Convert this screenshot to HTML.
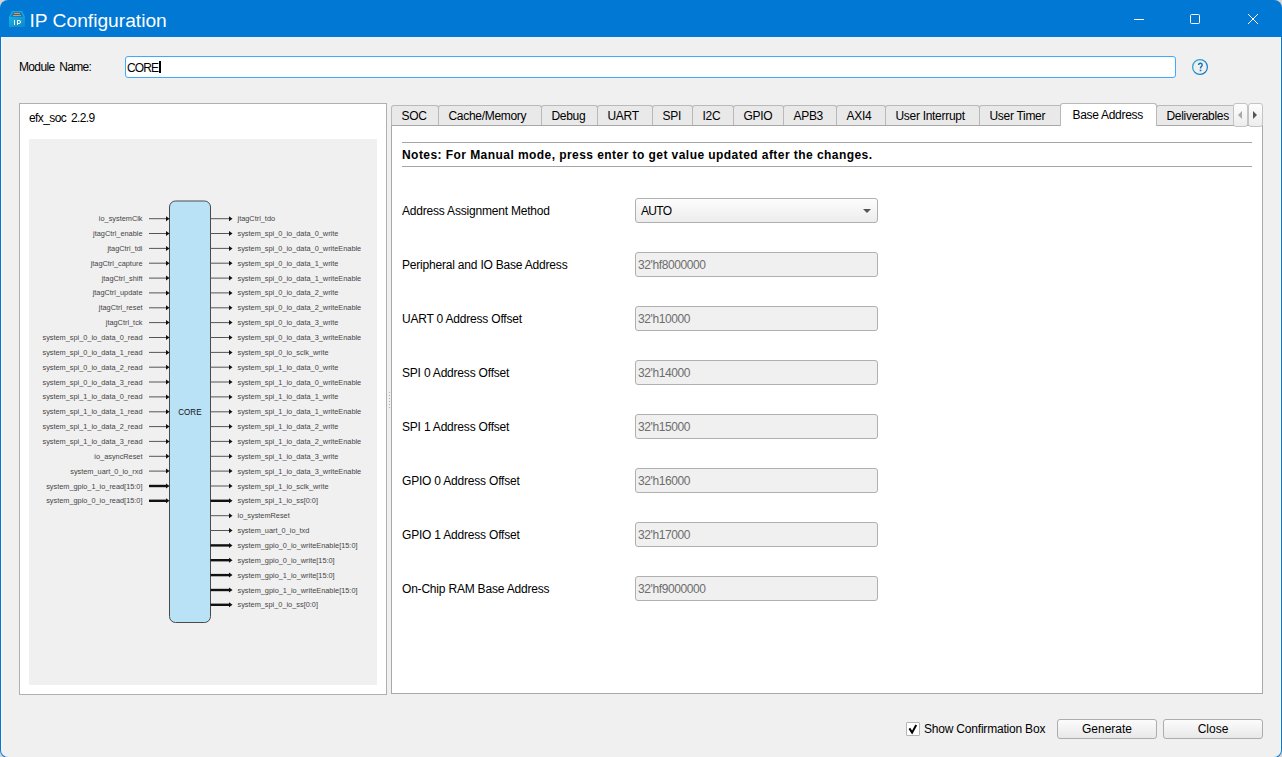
<!DOCTYPE html>
<html><head><meta charset="utf-8">
<style>
*{box-sizing:border-box;margin:0;padding:0}
html,body{width:1282px;height:757px;overflow:hidden;background:#d4d4d4}
body{position:relative;font-family:"Liberation Sans",sans-serif;font-size:12px;color:#000}
.abs{position:absolute}
#win{position:absolute;left:0;top:0;width:1282px;height:758px;background:#0078d4;border-radius:8px;overflow:hidden}
#client{position:absolute;left:1px;top:37px;width:1280px;height:720px;background:#f0f0f0;border-left:1px solid #fbf6ef;border-right:1px solid #fbf6ef;border-radius:0 0 7px 7px}
#title{position:absolute;left:29.5px;top:9px;color:#fff;font-size:19.2px;line-height:24px;white-space:pre}
.tb{position:absolute;background:#fff}
.lab{position:absolute;white-space:pre;line-height:14px}
#modin{position:absolute;left:125px;top:56px;width:1051px;height:22px;background:#fff;border:1px solid #3fa9ff;border-radius:3px}
#modin span{position:absolute;left:1px;top:4px;line-height:14px;font-size:12px;letter-spacing:-0.9px}
#lpanel{position:absolute;left:19px;top:103px;width:368px;height:592px;background:#fff;border:1px solid #b0b0b0}
#diag{position:absolute;left:29px;top:139px;width:348px;height:546px;background:#f0f0f0;overflow:hidden}
#diag text{font-family:"Liberation Sans",sans-serif;font-size:7.35px;fill:#454545}
#diag text.core{font-size:9.6px;fill:#111}
.tab{position:absolute;top:105px;height:20px;background:#e9e9e9;border:1px solid #b9b9b9;border-bottom:none;border-radius:3px 3px 0 0;font-size:12px;white-space:pre;overflow:hidden}
.tab span{position:absolute;left:9.5px;top:3px;line-height:14px;letter-spacing:-0.3px}
.tab.sel{top:103px;height:23px;background:#fff;z-index:3}
.tab.sel span{left:11.5px;top:4px}
#pane{position:absolute;left:391px;top:125px;width:872px;height:569px;background:#fff;border:1px solid #a8a8a8}
.hl{position:absolute;left:402px;width:850px;height:2px;background:#a6a6a6}
#notes{position:absolute;left:402px;top:148px;font-weight:bold;font-size:12px;line-height:14px;white-space:pre;letter-spacing:0.44px}
.lbl{position:absolute;left:402px;line-height:14px;white-space:pre;font-size:12px;letter-spacing:-0.2px}
.combo{position:absolute;left:635px;width:243px;height:25px;border:1px solid #b0b0b0;border-radius:3px;background:linear-gradient(#fdfdfd,#ececec)}
.combo span{position:absolute;left:5px;top:5px;line-height:14px;letter-spacing:-0.7px}
.arr{position:absolute;left:226.5px;top:9.5px;width:0;height:0;border-left:4px solid transparent;border-right:4px solid transparent;border-top:4px solid #555}
.field{position:absolute;left:635px;width:243px;height:25px;border:1px solid #b0b0b0;border-radius:3px;background:#f0f0f0}
.field span{position:absolute;left:2px;top:5px;line-height:14px;color:#6d6d6d;letter-spacing:-0.4px}
.btn{position:absolute;top:719px;width:100px;height:20px;border:1px solid #adadad;border-radius:3px;background:linear-gradient(#fcfcfc,#e8e8e8);text-align:center;line-height:19px;font-size:12px}
.sbtn{position:absolute;top:103px;width:15px;height:24px;border:1px solid #c4c4c4;border-radius:3px;background:linear-gradient(#fdfdfd,#ededed);z-index:4}
</style></head><body>
<div id="win">
  <div id="client"></div>
</div>
<!-- title icon -->
<svg class="abs" style="left:9px;top:11px" width="16" height="16" viewBox="0 0 16 16">
  <defs><linearGradient id="ig" x1="0" y1="0" x2="1" y2="1"><stop offset="0" stop-color="#17b1df"/><stop offset="1" stop-color="#0d88c8"/></linearGradient></defs>
  <path d="M3 0H13L16 6H0Z" fill="#12ace0"/>
  <path d="M4 1.2H12L14.6 6.5H1.4Z" fill="#0a74d0"/>
  <rect x="0" y="5.8" width="16" height="10.2" fill="url(#ig)"/>
  <rect x="5" y="2" width="6" height="1" fill="#f6901e"/><rect x="4" y="4" width="8" height="1" fill="#f6901e"/>
  <rect x="5" y="9" width="1" height="5" fill="#fff"/>
  <rect x="8" y="9" width="1" height="5" fill="#fff"/><path d="M8.5 9.5H10Q11.5 9.5 11.5 11Q11.5 12.5 10 12.5H8.5" fill="none" stroke="#fff" stroke-width="1"/>
</svg>
<div id="title">IP Configuration</div>
<!-- window buttons -->
<div class="tb" style="left:1134px;top:19px;width:10px;height:1px"></div>
<div class="abs" style="left:1190px;top:14px;width:10px;height:10px;border:1px solid #fff;border-radius:1.5px"></div>
<svg class="abs" style="left:1247px;top:13px" width="12" height="12" viewBox="0 0 12 12"><path d="M1 1L11 11M11 1L1 11" stroke="#fff" stroke-width="1"/></svg>

<div class="lab" style="left:19px;top:60px;letter-spacing:-0.65px;word-spacing:2px">Module Name:</div>
<div id="modin"><span>CORE</span><div class="abs" style="left:33px;top:4px;width:2px;height:12px;background:#000"></div></div>
<svg class="abs" style="left:1191px;top:58px" width="18" height="18" viewBox="0 0 18 18">
  <defs><linearGradient id="hg" x1="0" y1="0" x2="1" y2="1"><stop offset="0" stop-color="#2bb3dc"/><stop offset="1" stop-color="#0b6fbf"/></linearGradient></defs>
  <circle cx="9" cy="9" r="7.4" fill="none" stroke="url(#hg)" stroke-width="1.2"/>
  <path d="M7.6 7.1C7.6 5.8 8.4 5.2 9.4 5.2C10.5 5.2 11.2 5.9 11.2 6.9C11.2 8 10.3 8.4 9.9 9C9.6 9.4 9.5 9.8 9.5 10.6" fill="none" stroke="#1a6fb5" stroke-width="1.4"/>
  <rect x="8.7" y="11.7" width="1.7" height="1.5" fill="#1a6fb5"/>
</svg>

<div id="lpanel"></div>
<div class="lab" style="left:29px;top:111px;letter-spacing:-0.6px;word-spacing:2px">efx_soc 2.2.9</div>
<div id="diag"><svg width="348" height="546" viewBox="29 139 348 546">
<defs><clipPath id="rc"><rect x="0" y="0" width="362" height="800"/></clipPath></defs>
<rect x="169.5" y="201" width="41" height="421.5" rx="6" ry="6" fill="#B9E2F7" stroke="#4a4a4a" stroke-width="1"/>
<text x="178.3" y="415.2" class="core" textLength="23.2" lengthAdjust="spacingAndGlyphs">CORE</text>
<line x1="149" y1="218.7" x2="166" y2="218.7" stroke="#555" stroke-width="1"/>
<path d="M166 216.2L169.5 218.7L166 221.2Z" fill="#111"/>
<text x="142.5" y="221.2" text-anchor="end">io_systemClk</text>
<line x1="149" y1="233.5" x2="166" y2="233.5" stroke="#555" stroke-width="1"/>
<path d="M166 231.0L169.5 233.5L166 236.0Z" fill="#111"/>
<text x="142.5" y="236.0" text-anchor="end">jtagCtrl_enable</text>
<line x1="149" y1="248.4" x2="166" y2="248.4" stroke="#555" stroke-width="1"/>
<path d="M166 245.9L169.5 248.4L166 250.9Z" fill="#111"/>
<text x="142.5" y="250.9" text-anchor="end">jtagCtrl_tdi</text>
<line x1="149" y1="263.2" x2="166" y2="263.2" stroke="#555" stroke-width="1"/>
<path d="M166 260.8L169.5 263.2L166 265.8Z" fill="#111"/>
<text x="142.5" y="265.8" text-anchor="end">jtagCtrl_capture</text>
<line x1="149" y1="278.1" x2="166" y2="278.1" stroke="#555" stroke-width="1"/>
<path d="M166 275.6L169.5 278.1L166 280.6Z" fill="#111"/>
<text x="142.5" y="280.6" text-anchor="end">jtagCtrl_shift</text>
<line x1="149" y1="292.9" x2="166" y2="292.9" stroke="#555" stroke-width="1"/>
<path d="M166 290.4L169.5 292.9L166 295.4Z" fill="#111"/>
<text x="142.5" y="295.4" text-anchor="end">jtagCtrl_update</text>
<line x1="149" y1="307.8" x2="166" y2="307.8" stroke="#555" stroke-width="1"/>
<path d="M166 305.3L169.5 307.8L166 310.3Z" fill="#111"/>
<text x="142.5" y="310.3" text-anchor="end">jtagCtrl_reset</text>
<line x1="149" y1="322.6" x2="166" y2="322.6" stroke="#555" stroke-width="1"/>
<path d="M166 320.1L169.5 322.6L166 325.1Z" fill="#111"/>
<text x="142.5" y="325.1" text-anchor="end">jtagCtrl_tck</text>
<line x1="149" y1="337.5" x2="166" y2="337.5" stroke="#555" stroke-width="1"/>
<path d="M166 335.0L169.5 337.5L166 340.0Z" fill="#111"/>
<text x="142.5" y="340.0" text-anchor="end">system_spi_0_io_data_0_read</text>
<line x1="149" y1="352.4" x2="166" y2="352.4" stroke="#555" stroke-width="1"/>
<path d="M166 349.9L169.5 352.4L166 354.9Z" fill="#111"/>
<text x="142.5" y="354.9" text-anchor="end">system_spi_0_io_data_1_read</text>
<line x1="149" y1="367.2" x2="166" y2="367.2" stroke="#555" stroke-width="1"/>
<path d="M166 364.7L169.5 367.2L166 369.7Z" fill="#111"/>
<text x="142.5" y="369.7" text-anchor="end">system_spi_0_io_data_2_read</text>
<line x1="149" y1="382.0" x2="166" y2="382.0" stroke="#555" stroke-width="1"/>
<path d="M166 379.5L169.5 382.0L166 384.5Z" fill="#111"/>
<text x="142.5" y="384.5" text-anchor="end">system_spi_0_io_data_3_read</text>
<line x1="149" y1="396.9" x2="166" y2="396.9" stroke="#555" stroke-width="1"/>
<path d="M166 394.4L169.5 396.9L166 399.4Z" fill="#111"/>
<text x="142.5" y="399.4" text-anchor="end">system_spi_1_io_data_0_read</text>
<line x1="149" y1="411.8" x2="166" y2="411.8" stroke="#555" stroke-width="1"/>
<path d="M166 409.2L169.5 411.8L166 414.2Z" fill="#111"/>
<text x="142.5" y="414.2" text-anchor="end">system_spi_1_io_data_1_read</text>
<line x1="149" y1="426.6" x2="166" y2="426.6" stroke="#555" stroke-width="1"/>
<path d="M166 424.1L169.5 426.6L166 429.1Z" fill="#111"/>
<text x="142.5" y="429.1" text-anchor="end">system_spi_1_io_data_2_read</text>
<line x1="149" y1="441.4" x2="166" y2="441.4" stroke="#555" stroke-width="1"/>
<path d="M166 438.9L169.5 441.4L166 443.9Z" fill="#111"/>
<text x="142.5" y="443.9" text-anchor="end">system_spi_1_io_data_3_read</text>
<line x1="149" y1="456.3" x2="166" y2="456.3" stroke="#555" stroke-width="1"/>
<path d="M166 453.8L169.5 456.3L166 458.8Z" fill="#111"/>
<text x="142.5" y="458.8" text-anchor="end">io_asyncReset</text>
<line x1="149" y1="471.1" x2="166" y2="471.1" stroke="#555" stroke-width="1"/>
<path d="M166 468.6L169.5 471.1L166 473.6Z" fill="#111"/>
<text x="142.5" y="473.6" text-anchor="end">system_uart_0_io_rxd</text>
<line x1="149" y1="486.0" x2="166" y2="486.0" stroke="#111" stroke-width="2.4"/>
<path d="M166 483.5L169.5 486.0L166 488.5Z" fill="#111"/>
<text x="142.5" y="488.5" text-anchor="end">system_gpio_1_io_read[15:0]</text>
<line x1="149" y1="500.8" x2="166" y2="500.8" stroke="#111" stroke-width="2.4"/>
<path d="M166 498.3L169.5 500.8L166 503.3Z" fill="#111"/>
<text x="142.5" y="503.3" text-anchor="end">system_gpio_0_io_read[15:0]</text>
<line x1="210.5" y1="218.7" x2="229" y2="218.7" stroke="#555" stroke-width="1"/>
<path d="M229 216.2L232.5 218.7L229 221.2Z" fill="#111"/>
<text x="237.5" y="221.2" clip-path="url(#rc)">jtagCtrl_tdo</text>
<line x1="210.5" y1="233.5" x2="229" y2="233.5" stroke="#555" stroke-width="1"/>
<path d="M229 231.0L232.5 233.5L229 236.0Z" fill="#111"/>
<text x="237.5" y="236.0" clip-path="url(#rc)">system_spi_0_io_data_0_write</text>
<line x1="210.5" y1="248.4" x2="229" y2="248.4" stroke="#555" stroke-width="1"/>
<path d="M229 245.9L232.5 248.4L229 250.9Z" fill="#111"/>
<text x="237.5" y="250.9" clip-path="url(#rc)">system_spi_0_io_data_0_writeEnable</text>
<line x1="210.5" y1="263.2" x2="229" y2="263.2" stroke="#555" stroke-width="1"/>
<path d="M229 260.8L232.5 263.2L229 265.8Z" fill="#111"/>
<text x="237.5" y="265.8" clip-path="url(#rc)">system_spi_0_io_data_1_write</text>
<line x1="210.5" y1="278.1" x2="229" y2="278.1" stroke="#555" stroke-width="1"/>
<path d="M229 275.6L232.5 278.1L229 280.6Z" fill="#111"/>
<text x="237.5" y="280.6" clip-path="url(#rc)">system_spi_0_io_data_1_writeEnable</text>
<line x1="210.5" y1="292.9" x2="229" y2="292.9" stroke="#555" stroke-width="1"/>
<path d="M229 290.4L232.5 292.9L229 295.4Z" fill="#111"/>
<text x="237.5" y="295.4" clip-path="url(#rc)">system_spi_0_io_data_2_write</text>
<line x1="210.5" y1="307.8" x2="229" y2="307.8" stroke="#555" stroke-width="1"/>
<path d="M229 305.3L232.5 307.8L229 310.3Z" fill="#111"/>
<text x="237.5" y="310.3" clip-path="url(#rc)">system_spi_0_io_data_2_writeEnable</text>
<line x1="210.5" y1="322.6" x2="229" y2="322.6" stroke="#555" stroke-width="1"/>
<path d="M229 320.1L232.5 322.6L229 325.1Z" fill="#111"/>
<text x="237.5" y="325.1" clip-path="url(#rc)">system_spi_0_io_data_3_write</text>
<line x1="210.5" y1="337.5" x2="229" y2="337.5" stroke="#555" stroke-width="1"/>
<path d="M229 335.0L232.5 337.5L229 340.0Z" fill="#111"/>
<text x="237.5" y="340.0" clip-path="url(#rc)">system_spi_0_io_data_3_writeEnable</text>
<line x1="210.5" y1="352.4" x2="229" y2="352.4" stroke="#555" stroke-width="1"/>
<path d="M229 349.9L232.5 352.4L229 354.9Z" fill="#111"/>
<text x="237.5" y="354.9" clip-path="url(#rc)">system_spi_0_io_sclk_write</text>
<line x1="210.5" y1="367.2" x2="229" y2="367.2" stroke="#555" stroke-width="1"/>
<path d="M229 364.7L232.5 367.2L229 369.7Z" fill="#111"/>
<text x="237.5" y="369.7" clip-path="url(#rc)">system_spi_1_io_data_0_write</text>
<line x1="210.5" y1="382.0" x2="229" y2="382.0" stroke="#555" stroke-width="1"/>
<path d="M229 379.5L232.5 382.0L229 384.5Z" fill="#111"/>
<text x="237.5" y="384.5" clip-path="url(#rc)">system_spi_1_io_data_0_writeEnable</text>
<line x1="210.5" y1="396.9" x2="229" y2="396.9" stroke="#555" stroke-width="1"/>
<path d="M229 394.4L232.5 396.9L229 399.4Z" fill="#111"/>
<text x="237.5" y="399.4" clip-path="url(#rc)">system_spi_1_io_data_1_write</text>
<line x1="210.5" y1="411.8" x2="229" y2="411.8" stroke="#555" stroke-width="1"/>
<path d="M229 409.2L232.5 411.8L229 414.2Z" fill="#111"/>
<text x="237.5" y="414.2" clip-path="url(#rc)">system_spi_1_io_data_1_writeEnable</text>
<line x1="210.5" y1="426.6" x2="229" y2="426.6" stroke="#555" stroke-width="1"/>
<path d="M229 424.1L232.5 426.6L229 429.1Z" fill="#111"/>
<text x="237.5" y="429.1" clip-path="url(#rc)">system_spi_1_io_data_2_write</text>
<line x1="210.5" y1="441.4" x2="229" y2="441.4" stroke="#555" stroke-width="1"/>
<path d="M229 438.9L232.5 441.4L229 443.9Z" fill="#111"/>
<text x="237.5" y="443.9" clip-path="url(#rc)">system_spi_1_io_data_2_writeEnable</text>
<line x1="210.5" y1="456.3" x2="229" y2="456.3" stroke="#555" stroke-width="1"/>
<path d="M229 453.8L232.5 456.3L229 458.8Z" fill="#111"/>
<text x="237.5" y="458.8" clip-path="url(#rc)">system_spi_1_io_data_3_write</text>
<line x1="210.5" y1="471.1" x2="229" y2="471.1" stroke="#555" stroke-width="1"/>
<path d="M229 468.6L232.5 471.1L229 473.6Z" fill="#111"/>
<text x="237.5" y="473.6" clip-path="url(#rc)">system_spi_1_io_data_3_writeEnable</text>
<line x1="210.5" y1="486.0" x2="229" y2="486.0" stroke="#555" stroke-width="1"/>
<path d="M229 483.5L232.5 486.0L229 488.5Z" fill="#111"/>
<text x="237.5" y="488.5" clip-path="url(#rc)">system_spi_1_io_sclk_write</text>
<line x1="210.5" y1="500.8" x2="229" y2="500.8" stroke="#111" stroke-width="2.4"/>
<path d="M229 498.3L232.5 500.8L229 503.3Z" fill="#111"/>
<text x="237.5" y="503.3" clip-path="url(#rc)">system_spi_1_io_ss[0:0]</text>
<line x1="210.5" y1="515.7" x2="229" y2="515.7" stroke="#555" stroke-width="1"/>
<path d="M229 513.2L232.5 515.7L229 518.2Z" fill="#111"/>
<text x="237.5" y="518.2" clip-path="url(#rc)">io_systemReset</text>
<line x1="210.5" y1="530.5" x2="229" y2="530.5" stroke="#555" stroke-width="1"/>
<path d="M229 528.0L232.5 530.5L229 533.0Z" fill="#111"/>
<text x="237.5" y="533.0" clip-path="url(#rc)">system_uart_0_io_txd</text>
<line x1="210.5" y1="545.4" x2="229" y2="545.4" stroke="#111" stroke-width="2.4"/>
<path d="M229 542.9L232.5 545.4L229 547.9Z" fill="#111"/>
<text x="237.5" y="547.9" clip-path="url(#rc)">system_gpio_0_io_writeEnable[15:0]</text>
<line x1="210.5" y1="560.2" x2="229" y2="560.2" stroke="#111" stroke-width="2.4"/>
<path d="M229 557.8L232.5 560.2L229 562.8Z" fill="#111"/>
<text x="237.5" y="562.8" clip-path="url(#rc)">system_gpio_0_io_write[15:0]</text>
<line x1="210.5" y1="575.1" x2="229" y2="575.1" stroke="#111" stroke-width="2.4"/>
<path d="M229 572.6L232.5 575.1L229 577.6Z" fill="#111"/>
<text x="237.5" y="577.6" clip-path="url(#rc)">system_gpio_1_io_write[15:0]</text>
<line x1="210.5" y1="590.0" x2="229" y2="590.0" stroke="#111" stroke-width="2.4"/>
<path d="M229 587.5L232.5 590.0L229 592.5Z" fill="#111"/>
<text x="237.5" y="592.5" clip-path="url(#rc)">system_gpio_1_io_writeEnable[15:0]</text>
<line x1="210.5" y1="604.8" x2="229" y2="604.8" stroke="#111" stroke-width="2.4"/>
<path d="M229 602.3L232.5 604.8L229 607.3Z" fill="#111"/>
<text x="237.5" y="607.3" clip-path="url(#rc)">system_spi_0_io_ss[0:0]</text>
</svg></div>

<div id="pane"></div>
<svg class="abs" style="left:388px;top:390px" width="3" height="20" viewBox="0 0 3 20"><g fill="#b4b4b4"><rect x="1" y="2" width="1" height="1"/><rect x="1" y="5" width="1" height="1"/><rect x="1" y="8" width="1" height="1"/><rect x="1" y="11" width="1" height="1"/><rect x="1" y="14" width="1" height="1"/><rect x="1" y="17" width="1" height="1"/></g></svg>
<div class="tab" style="left:391px;width:48px"><span>SOC</span></div>
<div class="tab" style="left:438px;width:104px"><span>Cache/Memory</span></div>
<div class="tab" style="left:541px;width:57px"><span>Debug</span></div>
<div class="tab" style="left:597px;width:56px"><span>UART</span></div>
<div class="tab" style="left:652px;width:41px"><span>SPI</span></div>
<div class="tab" style="left:692px;width:42px"><span>I2C</span></div>
<div class="tab" style="left:733px;width:51px"><span>GPIO</span></div>
<div class="tab" style="left:783px;width:54px"><span>APB3</span></div>
<div class="tab" style="left:836px;width:50px"><span>AXI4</span></div>
<div class="tab" style="left:885px;width:95px"><span>User Interrupt</span></div>
<div class="tab" style="left:979px;width:83px"><span>User Timer</span></div>
<div class="tab sel" style="left:1060px;width:97px"><span>Base Address</span></div>
<div class="tab" style="left:1156px;width:77px;border-right:none;border-top-right-radius:0"><span>Deliverables</span></div>
<div class="sbtn" style="left:1233px"><svg width="13" height="22" viewBox="0 0 13 22"><path d="M8 7L4 11L8 15Z" fill="#a9a9a9"/></svg></div>
<div class="sbtn" style="left:1248px"><svg width="13" height="22" viewBox="0 0 13 22"><path d="M4 7L8 11L4 15Z" fill="#555"/></svg></div>
<div class="hl" style="top:142px;height:1px"></div>
<div id="notes">Notes: For Manual mode, press enter to get value updated after the changes.</div>
<div class="hl" style="top:166px;height:1px"></div>
<div class="lbl" style="top:204px">Address Assignment Method</div>
<div class="combo" style="top:198px"><span>AUTO</span><i class="arr"></i></div>
<div class="lbl" style="top:258px">Peripheral and IO Base Address</div>
<div class="field" style="top:252px"><span>32'hf8000000</span></div>
<div class="lbl" style="top:312px">UART 0 Address Offset</div>
<div class="field" style="top:306px"><span>32'h10000</span></div>
<div class="lbl" style="top:366px">SPI 0 Address Offset</div>
<div class="field" style="top:360px"><span>32'h14000</span></div>
<div class="lbl" style="top:420px">SPI 1 Address Offset</div>
<div class="field" style="top:414px"><span>32'h15000</span></div>
<div class="lbl" style="top:474px">GPIO 0 Address Offset</div>
<div class="field" style="top:468px"><span>32'h16000</span></div>
<div class="lbl" style="top:528px">GPIO 1 Address Offset</div>
<div class="field" style="top:522px"><span>32'h17000</span></div>
<div class="lbl" style="top:582px">On-Chip RAM Base Address</div>
<div class="field" style="top:576px"><span>32'hf9000000</span></div>

<div class="abs" style="left:906px;top:722px;width:14px;height:14px;border:1px solid #b5b5b5;border-radius:1px;background:#fff"></div>
<svg class="abs" style="left:906px;top:722px" width="14" height="14" viewBox="0 0 14 14"><path d="M3.4 6.4L6.1 10.6L10.2 3" fill="none" stroke="#000" stroke-width="2"/></svg>
<div class="lab" style="left:924px;top:722px;letter-spacing:-0.2px">Show Confirmation Box</div>
<div class="btn" style="left:1057px">Generate</div>
<div class="btn" style="left:1163px">Close</div>
</body></html>
